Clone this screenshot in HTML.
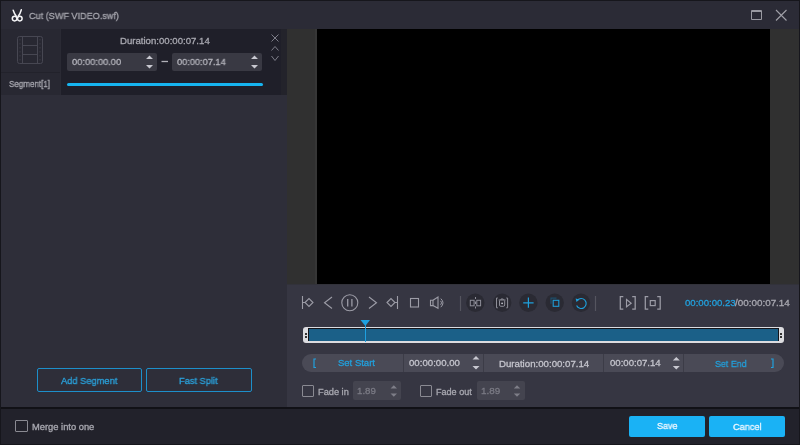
<!DOCTYPE html>
<html><head><meta charset="utf-8">
<style>
*{margin:0;padding:0;box-sizing:border-box}
html,body{width:800px;height:445px;overflow:hidden;background:#16161c}
body{position:relative;font-family:"Liberation Sans",sans-serif;}
.a{position:absolute}
.t{position:absolute;white-space:pre;line-height:1;transform-origin:0 0;-webkit-text-stroke:0.3px currentColor;will-change:transform}
svg{position:absolute;overflow:visible}
</style></head><body>
<!-- title bar -->
<div class="a" style="left:1px;top:1px;width:798px;height:28px;background:#2b2b36"></div>
<svg style="left:0;top:0" width="30" height="30">
  <g fill="none" stroke="#f4f4f6" stroke-width="1.5" stroke-linecap="round">
    <circle cx="14.6" cy="18.6" r="2.3"/><circle cx="19.8" cy="18.6" r="2.3"/>
    <path d="M13.2 10.2 Q14.2 13.5 16.3 16.2 M21.3 9.8 Q20.4 13.5 18.2 16.2"/>
  </g>
</svg>
<div class="t" style="left:29.00px;top:11px;font-size:9.5px;color:#a6a6ae;transform:scaleX(0.9574);">Cut (SWF VIDEO.swf)</div>
<div class="a" style="left:751px;top:10px;width:11px;height:10px;border:1.5px solid #9a9aa2;border-top-width:2px;border-radius:1px"></div>
<svg style="left:0;top:0" width="800" height="30"><path d="M776 10 L786.5 20.5 M786.5 10 L776 20.5" stroke="#a0a0a8" stroke-width="1.1"/></svg>

<!-- left panel -->
<div class="a" style="left:1px;top:29px;width:286px;height:378px;background:#2e2e39"></div>
<div class="a" style="left:1px;top:29px;width:60px;height:66px;background:#282832"></div>
<div class="a" style="left:1px;top:72px;width:60px;height:1px;background:#22222b"></div>
<div class="a" style="left:60px;top:29px;width:1px;height:66px;background:#2a2a34"></div>
<div class="a" style="left:61px;top:29px;width:220px;height:66px;background:#1f1f29"></div>
<div class="a" style="left:281px;top:29px;width:6px;height:66px;background:#23232b"></div>
<!-- film icon -->
<svg style="left:0;top:0" width="60" height="70">
  <g fill="none" stroke="#474752" stroke-width="1">
    <rect x="17.5" y="36.5" width="25" height="27" rx="2"/>
    <path d="M22.5 36.5 V63.5 M37.5 36.5 V63.5 M22.5 45.5 H37.5 M22.5 54.5 H37.5"/>
    <path d="M20 39 v1.5 M20 43 v1.5 M20 47 v1.5 M20 51 v1.5 M20 55 v1.5 M20 59 v1.5 M40 39 v1.5 M40 43 v1.5 M40 47 v1.5 M40 51 v1.5 M40 55 v1.5 M40 59 v1.5" stroke="#3a3a45"/>
  </g>
</svg>
<div class="t" style="left:9.00px;top:80px;font-size:9px;color:#a8a8b0;transform:scaleX(0.8913);">Segment[1]</div>
<div class="t" style="left:120.00px;top:36px;font-size:9.5px;color:#a8a8b0;transform:scaleX(1.0112);">Duration:00:00:07.14</div>
<div class="a" style="left:67px;top:53px;width:90px;height:18px;background:#393943;border-radius:2px"></div>
<div class="t" style="left:72.00px;top:57px;font-size:9.5px;color:#b4b4bc;transform:scaleX(0.9800);">00:00:00.00</div>
<div class="a" style="left:172px;top:53px;width:90px;height:18px;background:#393943;border-radius:2px"></div>
<div class="t" style="left:177.00px;top:57px;font-size:9.5px;color:#b4b4bc;transform:scaleX(0.9700);">00:00:07.14</div>
<svg style="left:0;top:0" width="290" height="90">
  <g fill="#c8c8d0">
    <path d="M146 59 L149.5 55.5 L153 59Z M146 65 L149.5 68.5 L153 65Z"/>
    <path d="M251 59 L254.5 55.5 L258 59Z M251 65 L254.5 68.5 L258 65Z"/>
  </g>
  <path d="M161.5 61.5 H168" stroke="#b0b0b8" stroke-width="1.3"/>
  <g fill="none" stroke="#7e7e89" stroke-width="1">
    <path d="M271.5 34.5 L278.5 41.5 M278.5 34.5 L271.5 41.5"/>
    <path d="M271.5 50.5 L275 46.5 L278.5 50.5"/>
    <path d="M271.5 56 L275 60.5 L278.5 56"/>
  </g>
</svg>
<div class="a" style="left:67px;top:83px;width:196px;height:3px;background:#16b4f0;border-radius:1.5px"></div>

<!-- gray strip + video -->
<div class="a" style="left:287px;top:29px;width:512px;height:256px;background:#303030"></div>
<div class="a" style="left:317px;top:29px;width:453px;height:255px;background:#000"></div>

<!-- controls -->
<div class="a" style="left:287px;top:285px;width:512px;height:122px;background:#363642"></div>
<div class="a" style="left:287px;top:284px;width:512px;height:1px;background:#32323a"></div>
<div class="a" style="left:315px;top:29px;width:2px;height:255px;background:#363636"></div>
<svg style="left:0;top:0" width="800" height="445">
  <g fill="none" stroke="#9c9ca6" stroke-width="1.1">
    <!-- go start -->
    <path d="M302.5 296 V309 M302.5 302.5 H305"/>
    <path d="M305 302.5 L309 298.5 L313 302.5 L309 306.5Z"/>
    <!-- prev -->
    <path d="M332 297 L324.5 302.7 L332 308.5"/>
    <!-- pause -->
    <circle cx="349.8" cy="302.7" r="8"/>
    <path d="M347.7 299 V306.5 M351.9 299 V306.5" stroke-width="1.3"/>
    <!-- next -->
    <path d="M369 297 L376.5 302.7 L369 308.5"/>
    <!-- go end -->
    <path d="M397.5 296 V309 M397.5 302.5 H395"/>
    <path d="M387 302.5 L391 298.5 L395 302.5 L391 306.5Z"/>
    <!-- stop -->
    <rect x="410.5" y="298.5" width="8" height="8.5"/>
    <!-- speaker -->
    <path d="M430.5 300.2 H433 V305.6 H430.5Z"/>
    <path d="M433 300.2 L438 297 V308.3 L433 305.6"/>
    <path d="M440.8 298.6 Q445.2 302.8 440.8 307.2 M440.6 300.9 Q442.6 302.8 440.6 304.8" stroke-width="1"/>
    <!-- separators -->
    <path d="M460.5 296 V311 M595.5 296 V311" stroke="#55555f" stroke-width="1.2"/>
    <!-- bracket play -->
    <path d="M623.3 296.7 H620.3 V309 H623.3 M632.2 296.7 H635.2 V309 H632.2" stroke-width="1.25"/>
    <path d="M626.5 299.5 V306.8 L631.2 303.2Z"/>
    <!-- bracket stop -->
    <path d="M648.3 296.7 H645.3 V309 H648.3 M657.2 296.7 H660.2 V309 H657.2" stroke-width="1.25"/>
    <rect x="650.3" y="300.6" width="4.9" height="5" stroke-width="1.2"/>
  </g>
  <g fill="#2a2a33">
    <circle cx="475.3" cy="302.8" r="9.2"/>
    <circle cx="502.2" cy="302.8" r="9.2"/>
    <circle cx="528.4" cy="302.8" r="9.2"/>
    <circle cx="554.7" cy="302.8" r="9.2"/>
    <circle cx="581" cy="302.8" r="9.2"/>
  </g>
  <g fill="none" stroke="#8e8e98" stroke-width="1">
    <rect x="470.3" y="300.3" width="3.8" height="5.5"/>
    <rect x="476.8" y="300.3" width="3.8" height="5.5"/>
    <path d="M475.5 297 V299 M475.5 301.5 V304 M475.5 306.5 V308.5"/>
    <path d="M497.8 298 H496.5 V307.8 H497.8 M506.3 298 H507.6 V307.8 H506.3"/>
    <path d="M498.7 300 H505.5 M499.5 300.5 V305 Q499.5 306.3 500.8 306.3 H503.4 Q504.7 306.3 504.7 305 V300.5 M501 300 V299 H503.2 V300"/>
  </g>
  <circle cx="502.1" cy="303.3" r="0.9" fill="#c8c8d0"/>
  <g fill="none" stroke="#1ea0dc" stroke-width="1.2">
    <path d="M523.2 302.8 H533.6 M528.4 297.6 V307.8"/>
    <rect x="553.2" y="300.3" width="5.6" height="6" stroke-width="1.05"/>
    <path d="M551 303.8 V298.2 H556.5" stroke="#1d4f6c"/>
    <path d="M577.3 300.3 A5 5 0 1 1 576.6 305.6" stroke-width="1.1"/>
  </g>
  <path d="M575.6 298.6 L579.4 299.6 L576.5 302.1Z" fill="#1ea0dc"/>
</svg>
<div class="t" style="left:684.70px;top:298px;font-size:9.5px;color:#22a0dc;transform:scaleX(1.0100);">00:00:00.23</div>
<div class="t" style="left:735.20px;top:298px;font-size:9.5px;color:#a8a8b0;transform:scaleX(1.0377);">/00:00:07.14</div>

<!-- timeline -->
<div class="a" style="left:303px;top:327px;width:481px;height:16px;background:#dcdce0;border-radius:3px"></div>
<div class="a" style="left:308px;top:328px;width:471px;height:13px;background:#15151a;"></div>
<div class="a" style="left:309px;top:328.5px;width:469px;height:12px;background:#1b6088;"></div>
<div class="a" style="left:305px;top:333px;width:2px;height:2px;background:#333"></div>
<div class="a" style="left:305px;top:335.5px;width:2px;height:2px;background:#333"></div>
<div class="a" style="left:780px;top:333px;width:2px;height:2px;background:#333"></div>
<div class="a" style="left:780px;top:335.5px;width:2px;height:2px;background:#333"></div>
<div class="a" style="left:365px;top:325px;width:1px;height:17px;background:#1ea0e0"></div>
<svg style="left:0;top:0" width="800" height="445"><path d="M360.5 320 H370 L365.3 326Z" fill="#1ea0e0"/></svg>

<!-- pill -->
<div class="a" style="left:302px;top:354px;width:482px;height:18px;background:#4a4a56;border-radius:9px"></div>
<div class="a" style="left:403px;top:354px;width:1px;height:18px;background:#3c3c47"></div>
<div class="a" style="left:483px;top:354px;width:1px;height:18px;background:#3c3c47"></div>
<div class="a" style="left:603px;top:354px;width:1px;height:18px;background:#3c3c47"></div>
<div class="a" style="left:683px;top:354px;width:1px;height:18px;background:#3c3c47"></div>
<svg style="left:0;top:0" width="800" height="445">
  <g fill="none" stroke="#22a0dc" stroke-width="1.2">
    <path d="M316 359 H314 V367.5 H316 M771 359 H773 V367.5 H771"/>
  </g>
  <g fill="#c8c8d0">
    <path d="M472.5 359.5 L476 356 L479.5 359.5Z M472.5 366 L476 369.5 L479.5 366Z"/>
    <path d="M672.8 360.5 L676.3 357 L679.8 360.5Z M672.8 366 L676.3 369.5 L679.8 366Z"/>
  </g>
</svg>
<div class="t" style="left:337.50px;top:358px;font-size:9.5px;color:#22a0dc;transform:scaleX(1.0000);">Set Start</div>
<div class="t" style="left:409.25px;top:358px;font-size:9.5px;color:#c4c4cc;transform:scaleX(1.0150);">00:00:00.00</div>
<div class="t" style="left:498.75px;top:359px;font-size:9.5px;color:#c4c4cc;transform:scaleX(1.0169);">Duration:00:00:07.14</div>
<div class="t" style="left:610.00px;top:358px;font-size:9.5px;color:#c4c4cc;transform:scaleX(1.0100);">00:00:07.14</div>
<div class="t" style="left:714.60px;top:359px;font-size:9.5px;color:#22a0dc;transform:scaleX(0.9353);">Set End</div>

<!-- fade -->
<div class="a" style="left:302px;top:385px;width:12px;height:12px;border:1.5px solid #8a8a92;border-radius:1px"></div>
<div class="t" style="left:317.50px;top:388px;font-size:9px;color:#a8a8b0;transform:scaleX(1.0250);">Fade in</div>
<div class="a" style="left:353px;top:381px;width:48px;height:19px;background:#44444f;border-radius:2px"></div>
<div class="t" style="left:356.80px;top:386px;font-size:9.5px;color:#7a7a84;transform:scaleX(1.0222);">1.89</div>
<div class="a" style="left:420px;top:385px;width:12px;height:12px;border:1.5px solid #8a8a92;border-radius:1px"></div>
<div class="t" style="left:435.80px;top:388px;font-size:9px;color:#a8a8b0;transform:scaleX(1.0056);">Fade out</div>
<div class="a" style="left:477px;top:381px;width:48px;height:19px;background:#44444f;border-radius:2px"></div>
<div class="t" style="left:480.80px;top:386px;font-size:9.5px;color:#7a7a84;transform:scaleX(1.0389);">1.89</div>
<svg style="left:0;top:0" width="800" height="445">
  <g fill="#7e7e88">
    <path d="M390.5 388.5 L393.8 385.2 L397 388.5Z M390.5 393.5 L393.8 396.8 L397 393.5Z"/>
    <path d="M513.8 388.5 L517 385.2 L520.3 388.5Z M513.8 393.5 L517 396.8 L520.3 393.5Z"/>
  </g>
</svg>

<!-- left buttons -->
<div class="a" style="left:37px;top:368px;width:105px;height:24px;border:1px solid #1d8fca;border-radius:2px"></div>
<div class="t" style="left:61.00px;top:376px;font-size:9.5px;color:#2aa2dc;transform:scaleX(0.9776);">Add Segment</div>
<div class="a" style="left:146px;top:368px;width:106px;height:24px;border:1px solid #1d8fca;border-radius:2px"></div>
<div class="t" style="left:179.30px;top:376px;font-size:9.5px;color:#2aa2dc;transform:scaleX(0.9775);">Fast Split</div>

<!-- bottom bar -->
<div class="a" style="left:1px;top:407px;width:798px;height:2px;background:#111116"></div>
<div class="a" style="left:1px;top:409px;width:798px;height:35px;background:#22222b"></div>
<div class="a" style="left:15px;top:420px;width:13px;height:12px;border:1.5px solid #8a8a92;border-radius:1px"></div>
<div class="t" style="left:31.50px;top:423px;font-size:9px;color:#a8a8b0;transform:scaleX(1.0375);">Merge into one</div>
<div class="a" style="left:629px;top:416px;width:76px;height:21px;background:#1ab2f5;border-radius:2px"></div>
<div class="t" style="left:657.00px;top:421px;font-size:9.5px;color:#f0f8ff;transform:scaleX(0.9524);">Save</div>
<div class="a" style="left:709px;top:416px;width:76px;height:21px;background:#1ab2f5;border-radius:2px"></div>
<div class="t" style="left:733.20px;top:422px;font-size:9.5px;color:#f0f8ff;transform:scaleX(0.9655);">Cancel</div>
</body></html>
